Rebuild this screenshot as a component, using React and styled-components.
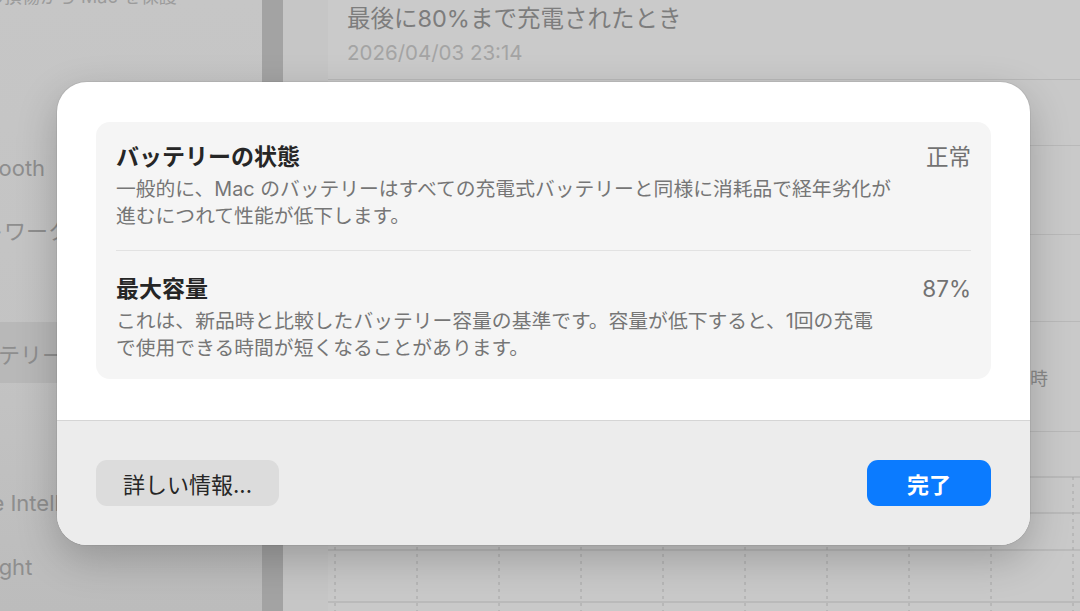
import styled, { createGlobalStyle } from "styled-components"

const Global = createGlobalStyle`
  html, body {
    margin: 0;
    padding: 0;
    width: 1080px;
    height: 611px;
    overflow: hidden;
    background: #c5c5c5;
    font-family: Inter, "Noto Sans CJK JP", sans-serif;
  }
`

const Screen = styled.div`
  position: relative;
  width: 1080px;
  height: 611px;
  display: flex;
  overflow: hidden;
`

const Sidebar = styled.div`
  width: 262px;
  flex: none;
  display: flex;
  flex-direction: column;
  background: linear-gradient(180deg, #c6c6c6 0%, #c3c3c3 60%, #bcbcbc 100%);
`

const SideNote = styled.div`
  height: 30px;
  margin-top: -18px;
  margin-left: -14px;
  font-size: 18px;
  line-height: 30px;
  color: #9b9b9b;
  white-space: nowrap;
`

const SideItem = styled.div`
  height: 61px;
  flex: none;
  margin-top: ${p => p.$mt || 0}px;
  display: flex;
  align-items: center;
  background: ${p => (p.$active ? "#b8b8b8" : "transparent")};
  font-size: 22px;
  color: #8e8e8e;
  white-space: nowrap;
  span { margin-left: ${p => p.$indent}px; }
`

const Splitter = styled.div`
  width: 21px;
  flex: none;
  background: #a3a3a3;
`

const Content = styled.div`
  flex: 1;
  display: flex;
  flex-direction: column;
  padding-left: 45px;
  background: #c6c6c6;
`

const Header = styled.div`
  height: 80px;
  flex: none;
  padding-left: 19px;
  background: #cacaca;
  border-bottom: 1px solid #b8b8b8;
  box-sizing: border-box;
`

const HeadTitle = styled.div`
  margin-top: 4px;
  font-size: 23.5px;
  line-height: 30px;
  color: #7d7d7d;
`

const HeadDate = styled.div`
  margin-top: 4px;
  font-size: 20.5px;
  line-height: 30px;
  color: #a4a4a4;
`

const Panel = styled.div`
  flex: 1;
  display: flex;
  flex-direction: column;
  background: #c9c9c9;
`

const PanelRow = styled.div`
  height: ${p => p.$h}px;
  flex: none;
  border-bottom: 1px solid #b9b9b9;
  box-sizing: border-box;
  display: flex;
  align-items: center;
  justify-content: flex-end;
  padding-right: 32px;
  font-size: 18px;
  color: #8a8a8a;
`

const Chart = styled.svg`
  flex: 1;
  width: 100%;
  display: block;
`

const Modal = styled.div`
  position: absolute;
  left: 57px;
  top: 82px;
  width: 973px;
  height: 463px;
  border-radius: 30px;
  background: #fff;
  overflow: hidden;
  display: flex;
  flex-direction: column;
  box-shadow: 0 14px 40px rgba(0, 0, 0, 0.22), 0 0 0 1px rgba(0, 0, 0, 0.05);
`

const ModalBody = styled.div`
  flex: 1;
  padding: 40px 39px 0;
`

const Card = styled.div`
  background: #f5f5f5;
  border-radius: 14px;
  padding: 0 20px;
`

const Row = styled.div`
  display: grid;
  grid-template-columns: 1fr auto;
  padding: ${p => p.$pt}px 0 ${p => p.$pb}px;
  border-bottom: ${p => (p.$divider ? "1px solid #e2e2e2" : "none")};
`

const Title = styled.div`
  font-size: 23px;
  line-height: 28px;
  font-weight: 600;
  color: #262626;
`

const Value = styled.div`
  font-size: 22.5px;
  line-height: 28px;
  color: #727272;
  text-align: right;
`

const Desc = styled.div`
  grid-column: 1 / -1;
  margin-top: 5px;
  font-size: 19.8px;
  line-height: 27px;
  color: #767676;
  white-space: nowrap;
`

const Footer = styled.div`
  height: 125px;
  flex: none;
  box-sizing: border-box;
  border-top: 1px solid #d5d5d5;
  background: #ececec;
  padding: 0 39px;
  display: flex;
  align-items: center;
  justify-content: space-between;
`

const Button = styled.button`
  width: ${p => p.$w}px;
  height: 46px;
  border: none;
  border-radius: 11px;
  font-family: inherit;
  font-size: 22px;
  font-weight: ${p => (p.$primary ? 600 : 400)};
  color: ${p => (p.$primary ? "#fff" : "#262626")};
  background: ${p => (p.$primary ? "#0b7bff" : "#dcdcdc")};
  padding: 0;
`

const vLines = [7, 89, 171, 253, 335, 417, 499, 581, 663, 745]

const App = () => {
  return (
    <>
      <Global />
      <Screen>
        <Sidebar>
          <SideNote>の損傷から Mac を保護</SideNote>
          <SideItem $mt={125} $indent={-54}><span>Bluetooth</span></SideItem>
          <SideItem $indent={-62}><span>ネットワーク</span></SideItem>
          <SideItem $mt={63} $active $indent={-46}><span>バッテリー</span></SideItem>
          <SideItem $mt={89} $indent={-56}><span>Apple Intelligence</span></SideItem>
          <SideItem $mt={3} $indent={-60}><span>Spotlight</span></SideItem>
        </Sidebar>
        <Splitter />
        <Content>
          <Header>
            <HeadTitle>最後に80%まで充電されたとき</HeadTitle>
            <HeadDate>2026/04/03 23:14</HeadDate>
          </Header>
          <Panel>
            <PanelRow $h={66} />
            <PanelRow $h={89} />
            <PanelRow $h={87} />
            <PanelRow $h={110}>最後にフル充電した日時</PanelRow>
            <Chart viewBox="0 0 752 179" preserveAspectRatio="none">
              {[45, 81, 118, 170].map(y => (
                <line key={y} x1="0" x2="752" y1={y} y2={y} stroke="#ababab" strokeWidth="1" />
              ))}
              {vLines.map(x => (
                <line key={x} x1={x} x2={x} y1="45" y2="179" stroke="#a6a6a6" strokeWidth="1" strokeDasharray="3 4" />
              ))}
            </Chart>
          </Panel>
        </Content>

        <Modal>
          <ModalBody>
            <Card>
              <Row $pt={21} $pb={20} $divider>
                <Title>バッテリーの状態</Title>
                <Value>正常</Value>
                <Desc>
                  一般的に、Mac のバッテリーはすべての充電式バッテリーと同様に消耗品で経年劣化が
                  <br />
                  進むにつれて性能が低下します。
                </Desc>
              </Row>
              <Row $pt={24} $pb={17}>
                <Title>最大容量</Title>
                <Value>87%</Value>
                <Desc>
                  これは、新品時と比較したバッテリー容量の基準です。容量が低下すると、1回の充電
                  <br />
                  で使用できる時間が短くなることがあります。
                </Desc>
              </Row>
            </Card>
          </ModalBody>
          <Footer>
            <Button $w={183}>詳しい情報...</Button>
            <Button $w={124} $primary>完了</Button>
          </Footer>
        </Modal>
      </Screen>
    </>
  )
}

export default App
